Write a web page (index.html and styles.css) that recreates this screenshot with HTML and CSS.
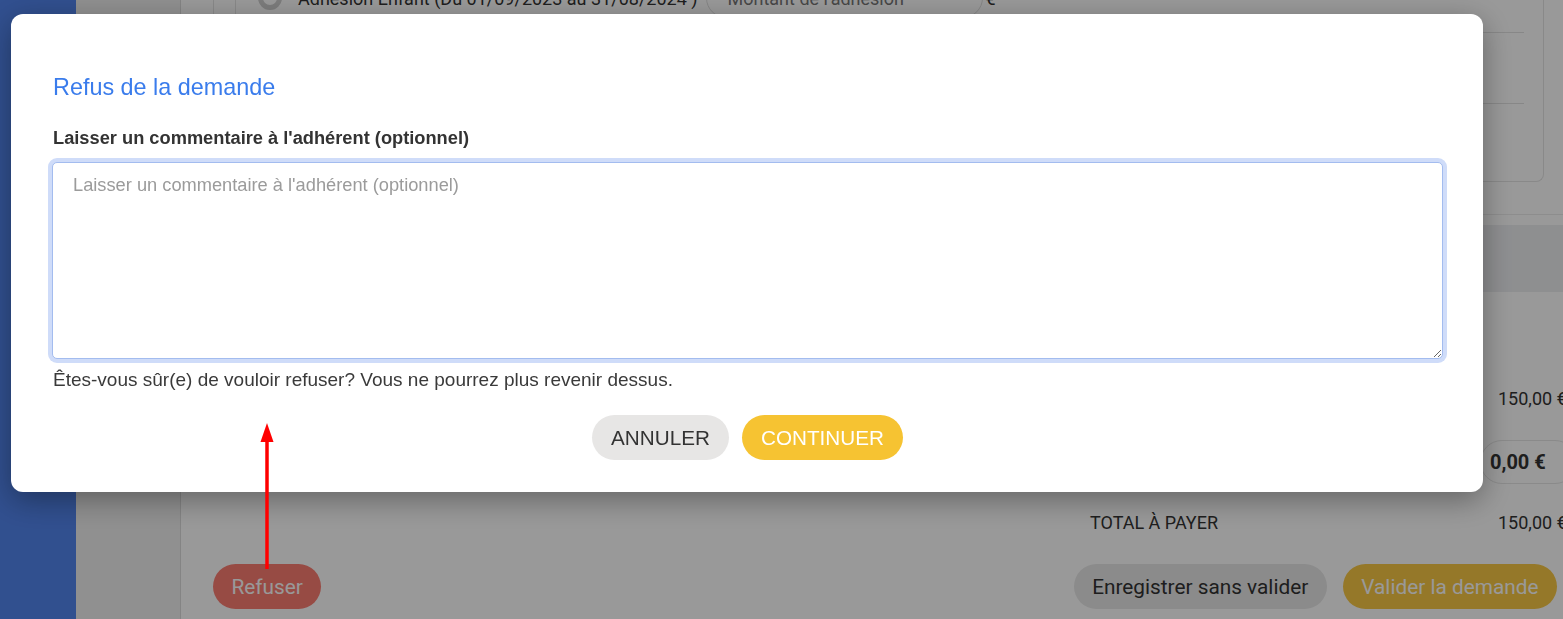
FILE: index.html
```html
<!DOCTYPE html>
<html lang="fr">
<head>
<meta charset="utf-8">
<title>Refus de la demande</title>
<link rel="stylesheet" href="styles.css">
</head>
<body>
<div class="app">
  <aside class="sidebar"></aside>
  <nav class="subnav"></nav>
  <main class="main">
    <div class="scroll">
      <section class="card">
        <div class="table">
          <div class="row row-top">
            <span class="radio"></span>
            <span class="adh-label">Adhésion Enfant (Du 01/09/2023 au 31/08/2024 )</span>
            <span class="amount-input">Montant de l'adhésion</span>
            <span class="euro">€</span>
          </div>
          <div class="row row-mid"></div>
          <div class="row row-last"></div>
        </div>
      </section>
      <section class="summary">
        <div class="band"></div>
        <div class="sum-rows">
          <div class="sum-row first"><span class="sum-label"></span><span class="sum-value">150,00 €</span></div>
          <div class="sum-row second"><span class="sum-label"></span><span class="sum-pill">0,00 €</span></div>
          <div class="sum-row third"><span class="sum-label">TOTAL À PAYER</span><span class="sum-value">150,00 €</span></div>
        </div>
        <div class="page-actions">
          <button class="btn-page btn-refuse">Refuser</button>
          <div class="right-actions">
            <button class="btn-page btn-save">Enregistrer sans valider</button>
            <button class="btn-page btn-validate">Valider la demande</button>
          </div>
        </div>
      </section>
    </div>
  </main>
</div>

<div class="overlay"></div>

<div class="modal" role="dialog">
  <h2 class="modal-title">Refus de la demande</h2>
  <label class="field-label" for="comment">Laisser un commentaire à l'adhérent (optionnel)</label>
  <textarea id="comment" class="comment focused" placeholder="Laisser un commentaire à l'adhérent (optionnel)"></textarea>
  <p class="confirm">Êtes-vous sûr(e) de vouloir refuser? Vous ne pourrez plus revenir dessus.</p>
  <div class="modal-actions">
    <button class="btn btn-cancel">Annuler</button>
    <button class="btn btn-continue">Continuer</button>
  </div>
</div>

<svg class="arrow" width="24" height="150" viewBox="0 0 24 150">
  <line x1="12" y1="16" x2="12" y2="146" stroke="#ff0000" stroke-width="3.5"/>
  <polygon points="12,0 5.5,19 18.5,19" fill="#ff0000"/>
</svg>
</body>
</html>
```

FILE: styles.css
```css
html, body {
  margin: 0;
  padding: 0;
  width: 1563px;
  height: 619px;
  overflow: hidden;
  font-family: Roboto, "Liberation Sans", Arial, sans-serif;
}

.app {
  display: grid;
  grid-template-columns: 76px 105px 1fr;
  height: 619px;
}

.sidebar {
  background: #5285ee;
}

.subnav {
  background: #f0f0f0;
  border-right: 1px solid #dcdcdc;
}

.main {
  background: #fff;
  overflow: hidden;
  min-width: 0;
}

.scroll {
  margin-top: -34px;
}

/* background card */
.card {
  margin: 0 19px 0 32px;
  border: 1px solid #e4e4e4;
  border-top: none;
  border-radius: 0 0 8px 8px;
  padding: 0 19px 0 21px;
}

.table {
  border-left: 1px solid #e4e4e4;
}

.row {
  border-bottom: 1px solid #e2e2e2;
}

.row-top {
  display: flex;
  align-items: center;
  padding: 12px 0 14px 22px;
  height: 40px;
}

.row-mid {
  height: 70px;
}

.row-last {
  height: 77px;
  border-bottom: none;
}

.radio {
  width: 14px;
  height: 14px;
  border: 5px solid #cfcfcf;
  border-radius: 50%;
  flex: none;
}

.adh-label {
  margin-left: 16px;
  font-size: 18px;
  color: #333;
  white-space: nowrap;
}

.amount-input {
  margin-left: 8px;
  height: 38px;
  width: 254px;
  border: 1px solid #dedede;
  border-radius: 20px;
  padding-left: 21px;
  display: flex;
  align-items: center;
  font-size: 18px;
  color: #777;
  white-space: nowrap;
}

.euro {
  margin-left: 3px;
  font-size: 18px;
  color: #333;
}

/* summary */
.summary {
  margin-top: 32px;
  border-top: 1px solid #ececec;
  padding-top: 10px;
}

.band {
  height: 67px;
  background: #edeef1;
}

.sum-rows {
  padding-left: 909px;
  padding-top: 84px;
}

.sum-row {
  display: flex;
  align-items: center;
  height: 44px;
  white-space: nowrap;
  font-size: 18px;
  color: #333;
}

.sum-row.second {
  margin-top: 20px;
}

.sum-row.third {
  margin-top: 16px;
}

.sum-label {
  width: 390px;
  flex: none;
}

.sum-value {
  padding-left: 18px;
}

.sum-pill {
  height: 44px;
  box-sizing: border-box;
  display: flex;
  align-items: center;
  padding: 0 30px 0 9px;
  border: 1px solid #e6e6e6;
  border-radius: 22px;
  font-size: 20px;
  font-weight: 700;
}

.page-actions {
  display: flex;
  justify-content: space-between;
  margin-top: 20px;
  padding: 0 6px 0 32px;
}

.right-actions {
  display: flex;
  gap: 16px;
}

.btn-page {
  height: 45px;
  padding: 0 18.5px;
  border: none;
  border-radius: 23px;
  font-family: Roboto, sans-serif;
  font-size: 20.8px;
}

.btn-refuse {
  background: #fc7d72;
  color: #fff;
}

.btn-save {
  background: #e8e8e8;
  color: #333;
}

.btn-validate {
  background: #f9c845;
  color: #fff;
}

/* overlay + modal */
.overlay {
  position: fixed;
  inset: 0;
  background: rgba(0, 0, 0, 0.4);
}

.modal {
  position: fixed;
  left: 11px;
  top: 14px;
  width: 1472px;
  box-sizing: border-box;
  padding: 59px 40px 32px 41px;
  background: #fff;
  border-radius: 12px;
  box-shadow: 0 8px 30px rgba(0, 0, 0, 0.35);
  font-family: "Liberation Sans", Arial, sans-serif;
}

.modal-title {
  margin: 0;
  padding-left: 1px;
  font-size: 23.4px;
  line-height: 28px;
  font-weight: normal;
  color: #3a7cec;
}

.field-label {
  display: block;
  margin: 26px 0 13px;
  padding-left: 1px;
  font-size: 18.25px;
  line-height: 22px;
  font-weight: 700;
  color: #333;
}

.comment {
  display: block;
  width: 100%;
  height: 197px;
  box-sizing: border-box;
  margin: 0;
  padding: 8px 20px;
  border: 1px solid #a3bcef;
  border-radius: 5px;
  font-family: "Liberation Sans", Arial, sans-serif;
  font-size: 18.25px;
  line-height: 1.5;
  color: #333;
  outline: none;
}

.comment.focused {
  box-shadow: 0 0 0 4px #cfdcf9;
}

.comment::placeholder {
  color: #9b9b9b;
}

.confirm {
  margin: 10px 0 0;
  padding-left: 1px;
  font-size: 19px;
  line-height: 21px;
  color: #3a3a3a;
}

.modal-actions {
  display: flex;
  justify-content: center;
  gap: 13px;
  margin-top: 25px;
}

.btn {
  height: 45px;
  padding: 0 19px;
  border: none;
  border-radius: 23px;
  font-family: "Liberation Sans", Arial, sans-serif;
  font-size: 20.7px;
  text-transform: uppercase;
}

.btn-cancel {
  background: #e7e6e5;
  color: #333;
}

.btn-continue {
  background: #f6c332;
  color: #fff;
}

.arrow {
  position: fixed;
  left: 255px;
  top: 423px;
}
```
